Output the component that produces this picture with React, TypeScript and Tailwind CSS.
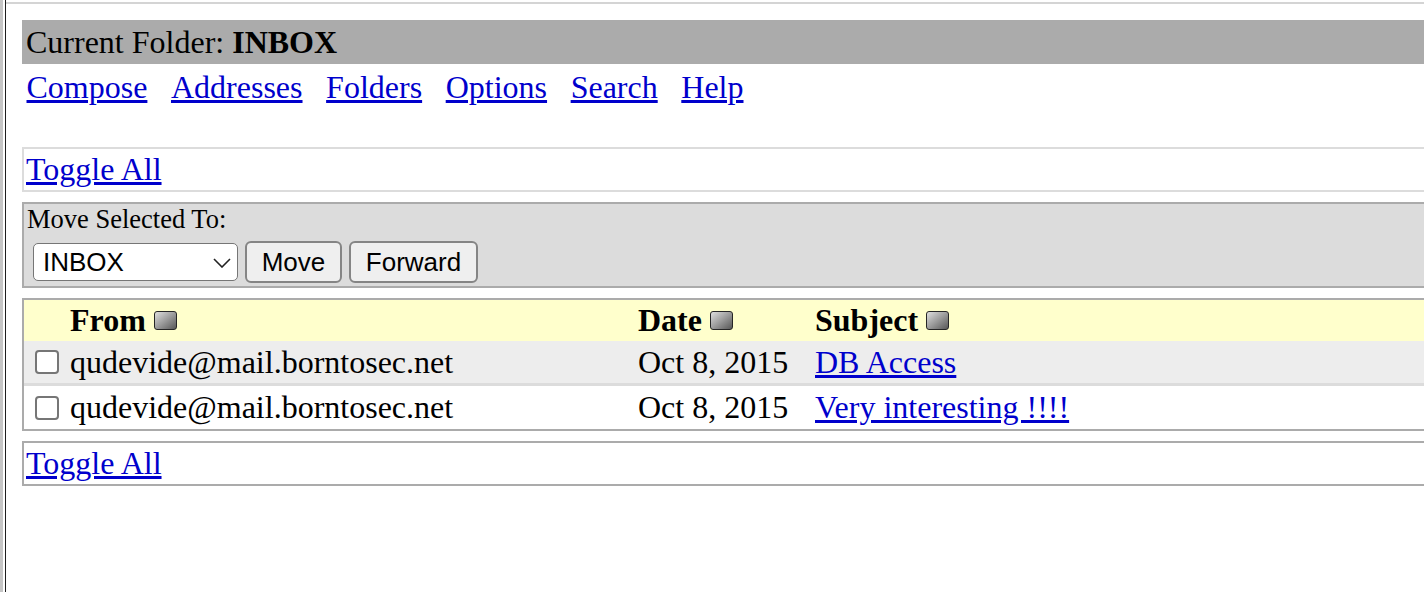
import { ReactNode } from 'react'

const messages = [
  { from: 'qudevide@mail.borntosec.net', date: 'Oct 8, 2015', subject: 'DB Access', bg: 'bg-[#ededed]' },
  { from: 'qudevide@mail.borntosec.net', date: 'Oct 8, 2015', subject: 'Very interesting !!!!', bg: 'bg-white' },
]

const navLinks = ['Compose', 'Addresses', 'Folders', 'Options', 'Search', 'Help']

function TextLink({ children }: { children: ReactNode }) {
  return (
    <a href="#" className="text-[#0000cc] underline">
      {children}
    </a>
  )
}

function SortIcon() {
  return (
    <span className="ml-[8px] inline-block h-[19px] w-[23px] rounded-[3px] border-[1.5px] border-[#262626] bg-linear-to-br from-[#e0e0e0] via-[#9c9c9c] to-[#585858]" />
  )
}

function Checkbox() {
  return (
    <input
      type="checkbox"
      className="block h-[24px] w-[24px] appearance-none rounded-[4px] border-2 border-[#767676] bg-white"
    />
  )
}

export default function App() {
  return (
    <div className="flex h-screen overflow-hidden bg-white font-['Liberation_Serif',serif] text-[32px] leading-[37px] text-black">
      {/* frame edge */}
      <div className="w-[3px] shrink-0 bg-[#c6c6c6]" />
      <div className="w-[2px] shrink-0 bg-white" />
      <div className="w-[1px] shrink-0 bg-[#1e1e1e]" />

      <div className="mt-[2px] min-w-0 flex-1 overflow-hidden border-t-2 border-[#d4d4d4] pl-[16px]">
        <div className="w-[1440px]">
          {/* Current folder */}
          <div className="mt-[16px] flex h-[44px] items-center bg-[#ababab] pl-[4px]">
            <span>
              Current Folder: <b>INBOX</b>
            </span>
          </div>

          {/* Menu */}
          <div className="mt-[5px] flex h-[37px] items-center gap-[23.6px] pl-[4.5px]">
            {navLinks.map((l) => (
              <TextLink key={l}>{l}</TextLink>
            ))}
          </div>

          {/* Toggle all top */}
          <div className="mt-[41px] flex h-[45px] items-center border-2 border-[#dcdcdc] pl-[2px]">
            <TextLink>Toggle All</TextLink>
          </div>

          {/* Move selected */}
          <div className="mt-[10px] h-[86px] border-2 border-[#ababab] bg-[#dcdcdc] pl-[3px]">
            <div className="h-[30px] text-[26.5px] leading-[30px]">Move Selected To:</div>
            <div className="mt-[7px] flex h-[42px] items-center gap-[7px] pl-[6px] font-['Liberation_Sans',Arial,sans-serif] text-[26px]">
              <div className="relative h-[38px] w-[205px]">
                <select className="h-full w-full appearance-none rounded-[5px] border-[1.5px] border-[#767676] bg-white pl-[9px] leading-[30px] outline-none">
                  <option>INBOX</option>
                </select>
                <svg
                  className="pointer-events-none absolute right-[7px] top-[15px]"
                  width="18"
                  height="10"
                  viewBox="0 0 18 10"
                  fill="none"
                  stroke="#222"
                  strokeWidth="1.6"
                >
                  <path d="M1 1l8 8 8-8" />
                </svg>
              </div>
              <button className="h-[42px] w-[97px] rounded-[6px] border-2 border-[#858585] bg-[#efefef] leading-[30px]">
                Move
              </button>
              <button className="h-[42px] w-[129px] rounded-[6px] border-2 border-[#858585] bg-[#efefef] leading-[30px]">
                Forward
              </button>
            </div>
          </div>

          {/* Message list */}
          <div className="mt-[10px] border-2 border-[#ababab]">
            <div className="grid h-[41px] grid-cols-[42px_568px_177px_1fr] items-center bg-[#ffffcc] font-bold">
              <div />
              <div className="flex items-center pl-[4px]">
                From
                <SortIcon />
              </div>
              <div className="flex items-center pl-[4px]">
                Date
                <SortIcon />
              </div>
              <div className="flex items-center pl-[4px]">
                Subject
                <SortIcon />
              </div>
            </div>
            {messages.map((m, i) => (
              <div
                key={i}
                className={`grid grid-cols-[42px_568px_177px_1fr] items-center ${m.bg} ${
                  i === 0 ? 'h-[45px] border-b-[3px] border-[#dcdcdc]' : 'h-[43px]'
                }`}
              >
                <div className="pl-[11px]">
                  <Checkbox />
                </div>
                <div className="pl-[4px]">{m.from}</div>
                <div className="pl-[4px]">{m.date}</div>
                <div className="pl-[4px]">
                  <TextLink>{m.subject}</TextLink>
                </div>
              </div>
            ))}
          </div>

          {/* Toggle all bottom */}
          <div className="mt-[10px] flex h-[45px] items-center border-2 border-[#ababab] pl-[2px]">
            <TextLink>Toggle All</TextLink>
          </div>
        </div>
      </div>
    </div>
  )
}
